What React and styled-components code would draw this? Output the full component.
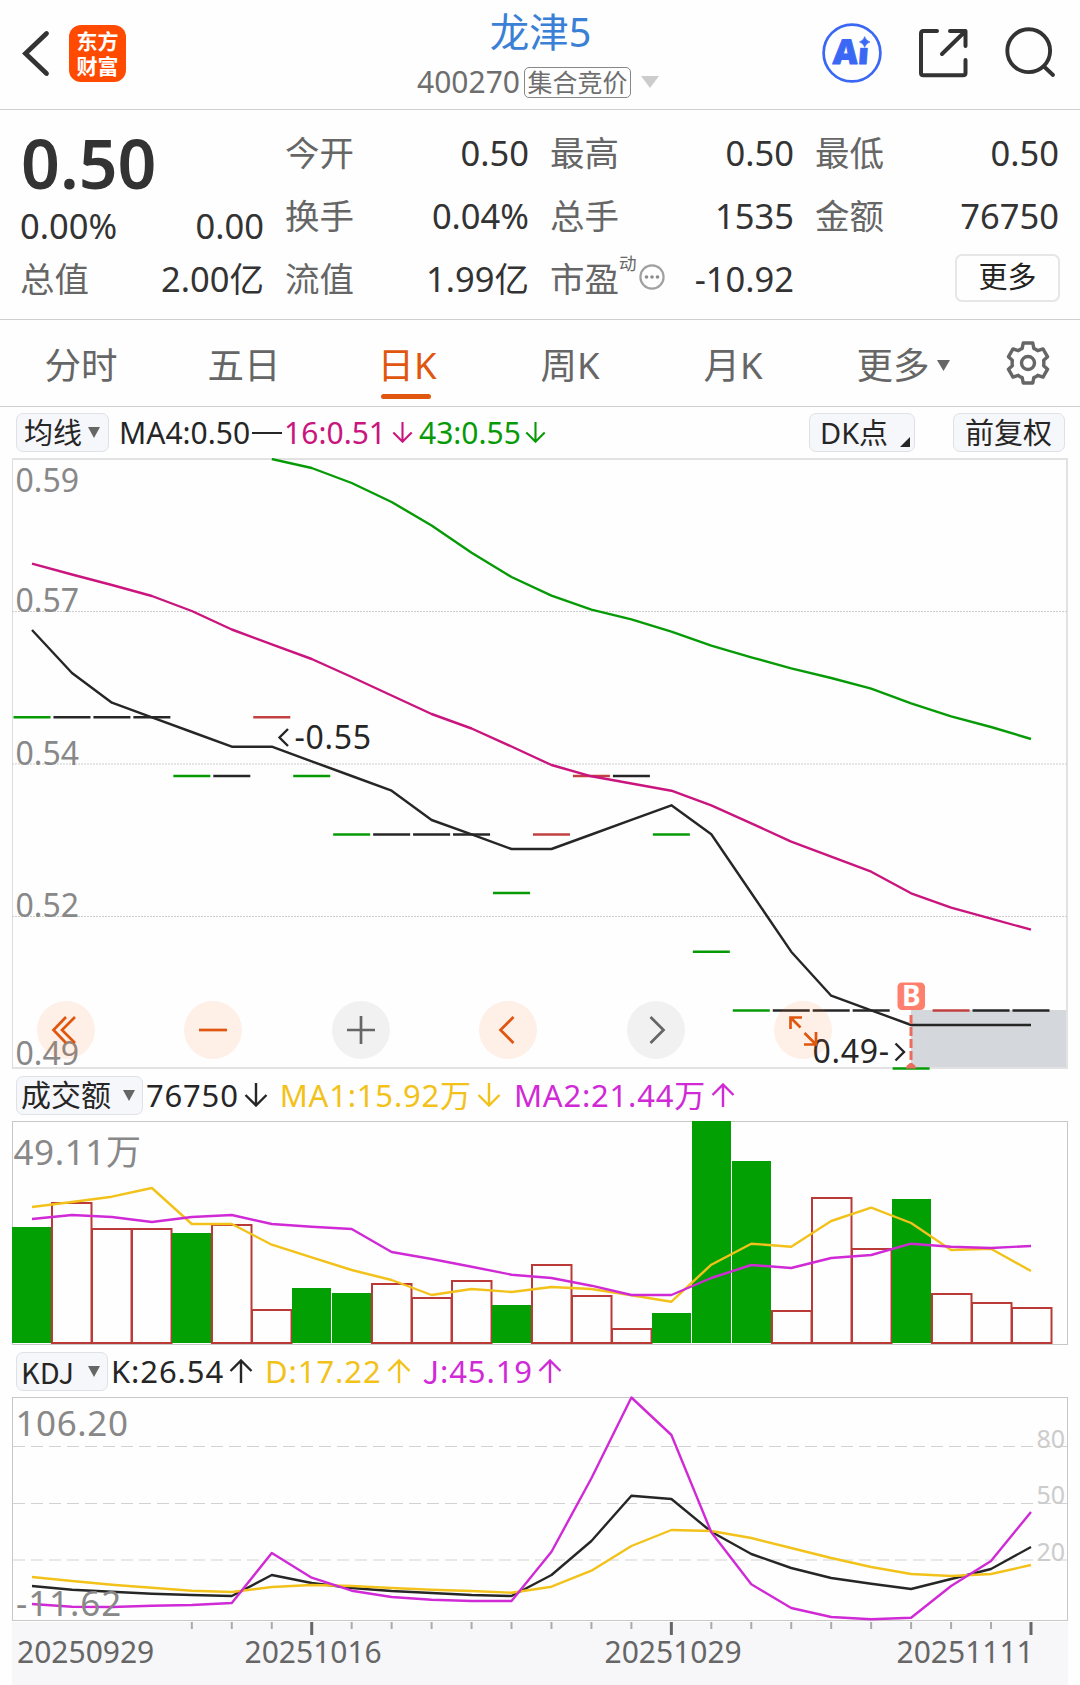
import React from "react";
import styled, { createGlobalStyle } from "styled-components";

const FONT = '"Noto Sans", "Noto Sans CJK SC", sans-serif';
const CJK = '"Noto Sans CJK SC", sans-serif';

const INK = "#333333";
const MUTED = "#666666";
const ORANGE = "#e0560f";
const GREEN = "#079a07";
const PINK = "#c9157d";
const YELLOW = "#f2c21a";
const PURPLE = "#d02ad6";
const BLACK = "#262626";
const RED = "#b93a36";

const GlobalStyle = createGlobalStyle`
  * { box-sizing: border-box; }
  html, body { margin: 0; padding: 0; background: #fefefe; }
  svg { display: block; flex: none; }
`;

const Page = styled.main`
  width: 1080px;
  height: 1685px;
  overflow: hidden;
  display: flex;
  flex-direction: column;
  background: #fefefe;
  color: ${INK};
  font-family: ${FONT};
`;

/* ---------- header ---------- */

const Header = styled.header`
  height: 110px;
  flex: none;
  display: grid;
  grid-template-columns: 360px 360px 360px;
  border-bottom: 1px solid #cfcfcf;
`;

const HeaderLeft = styled.div`
  display: flex;
  align-items: flex-start;
  padding: 25px 0 0 20px;
  gap: 17px;
`;

const Logo = styled.div`
  width: 57px;
  height: 57px;
  border-radius: 12px;
  background: #ff4a00;
  color: #fff;
  font: 700 21px/24.500px ${CJK};
  text-align: center;
  padding-top: 3px;
`;

const HeaderCenter = styled.div`
  display: flex;
  flex-direction: column;
  align-items: center;
  padding-top: 7px;
`;

const StockName = styled.h1`
  margin: 0 0 0 1px;
  font-size: 39.500px;
  font-weight: 400;
  line-height: 50px;
  color: #3a80d6;
`;

const CodeRow = styled.div`
  display: flex;
  align-items: center;
  height: 40px;
  margin: 5px 4px 0 0;
  font-size: 30px;
  line-height: 40px;
  color: #6e6e6e;
`;

const AuctionBadge = styled.span`
  width: 107px;
  height: 31px;
  margin: 0 10px 0 4px;
  border: 1.5px solid #888;
  border-radius: 5px;
  font-size: 25px;
  line-height: 28px;
  text-align: center;
  white-space: nowrap;
`;

const HeaderRight = styled.div`
  display: flex;
  justify-content: flex-end;
  align-items: flex-start;
  padding: 23px 24px 0 0;
  gap: 36px;
`;

/* ---------- quote ---------- */

const Quote = styled.section`
  height: 210px;
  flex: none;
  display: grid;
  grid-template-columns: 244px repeat(3, 244px);
  column-gap: 21px;
  padding: 11px 20px 0;
  border-bottom: 1px solid #cfcfcf;
`;

const QuoteColumn = styled.div`
  display: flex;
  flex-direction: column;
`;

const LastPrice = styled.div`
  height: 84px;
  padding-left: 1px;
  font-size: 68px;
  font-weight: 600;
  line-height: 84px;
`;

const QuoteRow = styled.div`
  height: ${(p) => p.$h || 63}px;
  line-height: ${(p) => p.$h || 63}px;
  font-size: 34.500px;
  display: flex;
  justify-content: space-between;
  align-items: center;
  white-space: nowrap;
`;

const Label = styled.span`
  color: ${MUTED};
  display: flex;
`;

const Sup = styled.sup`
  font-size: 17.500px;
  line-height: 28px;
  margin: 2px 2px 0 0;
  vertical-align: baseline;
  align-self: flex-start;
`;

const DotsBadge = styled.span`
  display: flex;
  align-items: center;
  height: 60px;
`;

const MoreButton = styled.button`
  width: 105px;
  height: 48px;
  margin: 0 -1px 2px auto;
  padding: 0 0 1px;
  border: 2px solid #e6e6e6;
  border-radius: 7px;
  background: #fefefe;
  color: #222;
  font: 400 29px/40px ${FONT};
`;

/* ---------- tabs ---------- */

const Tabs = styled.nav`
  height: 87px;
  flex: none;
  display: flex;
  border-bottom: 1px solid #cfcfcf;
`;

const Tab = styled.div`
  width: 163px;
  display: flex;
  flex-direction: column;
  align-items: center;
  padding: ${(p) => (p.$menu ? "20px 0 0 13px" : "20px 1px 0 0")};
  font-size: 36.500px;
  line-height: 50px;
  color: ${(p) => (p.$active ? ORANGE : MUTED)};
`;

const TabLabel = styled.span`
  display: flex;
  align-items: center;
  gap: 7px;
`;

const TabMarker = styled.span`
  width: 50px;
  height: 5px;
  margin: 4px 3px 0 0;
  border-radius: 3px;
  background: ${ORANGE};
`;

const SettingsCell = styled.div`
  flex: 1;
  display: flex;
  justify-content: center;
  padding: 20px 2px 0 0;
`;

/* ---------- indicator bars ---------- */

const IndicatorBar = styled.div`
  height: ${(p) => p.$h}px;
  flex: none;
  display: flex;
  align-items: center;
  padding: 0 15px 0 16px;
`;

const Chip = styled.button`
  width: ${(p) => p.$w}px;
  height: 39px;
  flex: none;
  display: flex;
  align-items: center;
  justify-content: space-between;
  padding: ${(p) => p.$pad || "0 8px 0 7px"};
  margin-left: ${(p) => p.$ml || 0}px;
  border: 1.5px solid #dfe1e6;
  border-radius: 7px;
  background: #f6f7fb;
  color: ${BLACK};
  font: 400 ${(p) => p.$size || 29}px/36px ${(p) => p.$font || FONT};
  white-space: nowrap;
`;

const Readout = styled.span`
  display: flex;
  margin-left: ${(p) => p.$ml || 0}px;
  color: ${(p) => p.$color};
  font-size: ${(p) => p.$size || 30}px;
  letter-spacing: ${(p) => p.$ls || 0}px;
  line-height: 40px;
  white-space: nowrap;
`;

const Letter = styled.span`
  font-family: ${CJK};
`;

const Arrow = styled.span`
  width: ${(p) => p.$w || 34}px;
  display: flex;
  justify-content: center;
  align-items: center;
`;

const Spacer = styled.div`
  flex: 1;
`;

/* ---------- charts ---------- */

const ChartPane = styled.section`
  position: relative;
  flex: none;
`;

const Controls = styled.div`
  position: absolute;
  left: 37px;
  right: 248px;
  bottom: 11px;
  display: flex;
  justify-content: space-between;
`;

const RoundButton = styled.button`
  width: 58px;
  height: 58px;
  padding: 0;
  border: 0;
  border-radius: 50%;
  background: ${(p) => (p.$muted ? "rgba(0,0,0,.05)" : "rgba(255,105,30,.1)")};
  color: ${(p) => (p.$muted ? MUTED : ORANGE)};
`;

const Triangle = ({ w = 12, h = 11, color = MUTED }) => (
  <svg width={w} height={h} viewBox="0 0 12 11" preserveAspectRatio="none">
    <path d="M0 0H12L6 11Z" fill={color} />
  </svg>
);

const MoveArrow = ({ up, w, size = 24 }) => (
  <Arrow $w={w}>
    <svg width={size} height={size} viewBox="0 0 24 24" fill="none" stroke="currentColor" strokeWidth="2.4">
      <path d={up ? "M12 24V1M1.5 12L12 1.5L22.5 12" : "M12 0V23M1.5 12L12 22.5L22.5 12"} />
    </svg>
  </Arrow>
);

const ControlIcon = ({ d }) => (
  <svg width="58" height="58" viewBox="0 0 58 58" fill="none" stroke="currentColor" strokeWidth="2.7">
    <path d={d} />
  </svg>
);

const X0 = 32;
const STEP = 39.96;
const xAt = (i) => X0 + STEP * i;
const toPoints = (values, start = 0) =>
  values.map((y, i) => `${xAt(i + start).toFixed(1)},${y}`).join(" ");

const Series = ({ values, start, color, width = 2.4 }) => (
  <polyline points={toPoints(values, start)} fill="none" stroke={color} strokeWidth={width} strokeLinejoin="round" />
);

const ma4 = [630, 673, 702.7, 717.3, 732, 746.7, 746.7, 761.3, 776, 790.7, 820, 834.3, 849, 849, 834.5, 819.8, 805.3, 834.3, 893, 951.7, 995.7, 1010.3, 1025, 1025, 1025, 1025];
const ma16 = [563.7, 574.5, 585, 596, 611, 629.5, 644.3, 659, 677, 695.5, 714, 728.5, 746.5, 765, 776.3, 783.5, 790.7, 805.3, 823.3, 841.7, 856.7, 871.7, 893.3, 907.7, 918.7, 929.7];
const ma43 = [459, 468, 483, 502, 525.5, 552.7, 577, 595.7, 609.7, 619.3, 631.7, 645.7, 657.3, 668.3, 678, 688.7, 703.3, 716.3, 727, 739];

const G = GREEN;
const K = BLACK;
const R = "#c24140";
const candles = [
  [717.3, G], [717.3, K], [717.3, K], [717.3, K], [776, G], [776, K], [717.3, R], [776, G],
  [834.5, G], [834.5, K], [834.5, K], [834.5, K], [893, G], [834.5, R], [776, R], [776, K],
  [834.5, G], [951.7, G], [1010.5, G], [1010.5, K], [1010.5, K], [1010.5, K], [1068.5, G],
  [1010.5, R], [1010.5, K], [1010.5, K],
];

const volumes = [
  [1227, 1], [1203, 0], [1229, 0], [1229, 0], [1233, 1], [1225, 0], [1310, 0], [1288, 1], [1293, 1],
  [1284, 0], [1298, 0], [1281, 0], [1305, 1], [1265, 0], [1296, 0], [1329, 0], [1313, 1], [1121, 1],
  [1161, 1], [1311, 0], [1198, 0], [1249, 0], [1199, 1], [1294, 0], [1303, 0], [1308, 0],
];
const volMa1 = [1207, 1202, 1196.7, 1188, 1224, 1224, 1244.7, 1257.3, 1270, 1280, 1295, 1289, 1292, 1287, 1289, 1295.3, 1301.7, 1264.7, 1243.7, 1246.7, 1221, 1207.7, 1223, 1250, 1248.7, 1271];
const volMa2 = [1219, 1215, 1217, 1222, 1217, 1215, 1224, 1226.7, 1229, 1252, 1259, 1266.7, 1274.7, 1278, 1285.7, 1295, 1295, 1278, 1265, 1268, 1258, 1255, 1243.7, 1246.7, 1248, 1246];

const kLine = [1586, 1589.7, 1591.7, 1593.7, 1595, 1596, 1575, 1583, 1588, 1591, 1593, 1595, 1596, 1575, 1541, 1495.7, 1499, 1531.7, 1554, 1568, 1578, 1583.7, 1589, 1579, 1569, 1547];
const dLine = [1577, 1581, 1584.7, 1587.7, 1590.7, 1592, 1587, 1585, 1586, 1588, 1589.7, 1591, 1592.7, 1586.7, 1570.7, 1546, 1530, 1531, 1538, 1548, 1558, 1567, 1574, 1576, 1574, 1565];
const jLine = [1604, 1606.7, 1607, 1605.8, 1605, 1603, 1553, 1577.7, 1590.7, 1597, 1599.7, 1601, 1601, 1551.7, 1478.3, 1397.5, 1435, 1532.3, 1584.3, 1608, 1617, 1619.3, 1617.7, 1586, 1561, 1512];

const PriceChart = () => (
  <svg width="1080" height="612" viewBox="0 458 1080 612" fontFamily={FONT}>
    <rect x="911" y="1010" width="156" height="58.5" fill="#d4d7dc" />
    <path d="M12.5 459V1068" stroke="#dcdcdc" strokeWidth="1" />
    <path d="M12 459H1067V1068H12" fill="none" stroke="#e2e2e2" strokeWidth="2" />
    <path d="M12 611.5H1067M12 764H1067M12 916.5H1067" stroke="#cdcdcd" strokeWidth="1" strokeDasharray="2 1" />
    {candles.map(([y, color], i) => (
      <path key={i} d={`M${xAt(i) - 18.5} ${y}h37`} stroke={color} strokeWidth="2.4" />
    ))}
    <Series values={ma43} start={6} color={GREEN} />
    <Series values={ma16} color={PINK} />
    <Series values={ma4} color={BLACK} />
    <g fontSize="32" fill="#888888">
      <text x="15.500" y="491.500">0.59</text>
      <text x="15.500" y="611.500">0.57</text>
      <text x="15.500" y="764.500">0.54</text>
      <text x="15.500" y="916.500">0.52</text>
      <text x="15.500" y="1065">0.49</text>
    </g>
    <g fontSize="32" fill={BLACK} letterSpacing="0.7">
      <text x="294.500" y="748.500">-0.55</text>
      <text x="812.500" y="1062.500">0.49-</text>
    </g>
    <path d="M288 729L279.5 737.5L288 746" fill="none" stroke={BLACK} strokeWidth="2.4" />
    <path d="M895.5 1043.5L904 1052L895.5 1060.5" fill="none" stroke={BLACK} strokeWidth="2.4" />
    <path d="M911 1015V1068" stroke="#ea6c5e" strokeWidth="3" strokeDasharray="9 3" />
    <path d="M906 1068.5a5 5 0 0 1 10 0z" fill="#ea6c5e" />
    <rect x="897.5" y="982.5" width="27.5" height="27.5" rx="4.5" fill="#ff7f6e" />
    <text x="911.3" y="1006" textAnchor="middle" fontSize="28" fontWeight="700" fill="#fff">B</text>
  </svg>
);

const VolumeChart = () => (
  <svg width="1080" height="226" viewBox="0 1120 1080 226" fontFamily={FONT}>
    <rect x="12.5" y="1121.5" width="1055" height="223" fill="none" stroke="#c8c8c8" />
    {volumes.map(([top, filled], i) =>
      filled ? (
        <rect key={i} x={12 + 40 * i} y={top} width="39" height={1343 - top} fill="#03a003" />
      ) : (
        <rect key={i} x={12 + 40 * i} y={top} width="39.5" height={1343 - top} fill="#fefefe" stroke={RED} strokeWidth="2" />
      )
    )}
    <Series values={volMa1} color={YELLOW} />
    <Series values={volMa2} color={PURPLE} />
    <text x="13.5" y="1164.500" fontSize="35" letterSpacing="0.6" fill="#888888">49.11万</text>
  </svg>
);

const dates = [
  ["20250929", 17],
  ["20251016", 244.5],
  ["20251029", 604.5],
  ["20251111", 896.5],
];

const KdjChart = () => (
  <svg width="1080" height="289" viewBox="0 1396 1080 289" fontFamily={FONT}>
    <rect x="12" y="1622" width="1056" height="63" fill="#f7f7fa" />
    <rect x="12.5" y="1397.5" width="1055" height="223" fill="none" stroke="#c8c8c8" />
    <path d="M13 1446.5H1067M13 1503.5H1067M13 1560H1067" stroke="#d2d2d2" strokeWidth="1.2" strokeDasharray="12 6" />
    <g fontSize="25" fill="#cccccc">
      <text x="1036.500" y="1447.500">80</text>
      <text x="1036.500" y="1504">50</text>
      <text x="1036.500" y="1560.500">20</text>
    </g>
    <Series values={kLine} color={BLACK} />
    <Series values={dLine} color={YELLOW} />
    <Series values={jLine} color={PURPLE} />
    <g fontSize="35" fill="#888888">
      <text x="15.5" y="1436" letterSpacing="0.6">106.20</text>
      <text x="16" y="1616" letterSpacing="0.9">-11.62</text>
    </g>
    {Array.from({ length: 22 }, (_, n) => n + 4).map((i) => {
      const major = i === 7 || i === 16 || i === 25;
      return (
        <path key={i} d={`M${xAt(i)} 1622v${major ? 13 : 7}`} stroke={major ? "#666" : "#aaa"} strokeWidth={major ? 3 : 2} />
      );
    })}
    <g fontSize="30" fill="#666666">
      {dates.map(([d, x]) => (
        <text key={d} x={x} y="1662.5">{d}</text>
      ))}
    </g>
  </svg>
);

/* ---------- icons ---------- */

const BackIcon = () => (
  <svg width="32" height="57" viewBox="20 25 32 57" fill="none" stroke={INK} strokeWidth="4.800" strokeLinecap="round">
    <path d="M46.500 33.500L25.500 53.500L46.500 73.500" />
  </svg>
);

const AiIcon = () => (
  <svg width="60" height="60" viewBox="0 0 60 60">
    <circle cx="30" cy="30" r="28.4" fill="none" stroke="#3a68f5" strokeWidth="2.7" />
    <g transform="translate(10.5 41.300) skewX(-4)">
      <text fontFamily='"Noto Sans", sans-serif' fontSize="34" fontWeight="900" fill="#3a68f5" stroke="#3a68f5" strokeWidth="1" strokeLinejoin="round">Ai</text>
    </g>
    <rect x="34.500" y="11" width="15" height="13.800" fill="#fefefe" />
    <path d="M42.7 13.6Q43.9 17.8 48 19Q43.9 20.2 42.7 24.4Q41.5 20.2 37.400 19Q41.5 17.8 42.7 13.6Z" fill="#3a68f5" stroke="#3a68f5" strokeWidth=".6" />
  </svg>
);

const ShareIcon = () => (
  <svg width="50" height="60" viewBox="918 23 50 60" fill="none" stroke={INK} strokeWidth="4" strokeLinecap="round" strokeLinejoin="round">
    <path d="M937 31H923.5Q921 31 921 33.5V73Q921 75.300 923.5 75.300H963Q965.500 75.300 965.500 73V60M950 31H965.500V46M965 31.500L942 54" />
  </svg>
);

const SearchIcon = () => (
  <svg width="52" height="60" viewBox="1004 23 52 60" fill="none" stroke={INK} strokeWidth="3.900" strokeLinecap="round">
    <circle cx="1028.700" cy="50.700" r="21.400" />
    <path d="M1044 66.500L1053 75" />
  </svg>
);

const GearIcon = () => (
  <svg width="44" height="46" viewBox="-22 -23 44 46" fill="none" stroke={MUTED} strokeWidth="3.4" strokeLinejoin="round">
    <path d="M-4.800 -20H4.800L5.800 -14.600Q8 -13.700 9.800 -12.300L15 -14.100L19.600 -6.200L15.700 -2.700Q16 0 15.700 2.700L19.600 6.200L15 14.100L9.800 12.300Q8 13.700 5.800 14.600L4.800 20H-4.800L-5.800 14.600Q-8 13.700 -9.800 12.300L-15 14.100L-19.600 6.200L-15.700 2.700Q-16 0 -15.700 -2.700L-19.600 -6.200L-15 -14.100L-9.800 -12.300Q-8 -13.700 -5.800 -14.600Z" />
    <circle r="6.500" />
  </svg>
);

const DotsIcon = () => (
  <svg width="26" height="26" viewBox="0 0 26 26">
    <circle cx="13" cy="13" r="11.600" fill="none" stroke="#a0a0a0" strokeWidth="2.200" />
    <g fill="#8c8c8c">
      <circle cx="7.500" cy="13" r="1.800" />
      <circle cx="13" cy="13" r="1.800" />
      <circle cx="18.500" cy="13" r="1.800" />
    </g>
  </svg>
);

const controls = [
  { d: "M29 16L16.500 29L29 42M38 16L25 29L38 42" },
  { d: "M15 29H43" },
  { d: "M15 29H43M29 15V43", muted: true },
  { d: "M34.500 16L21.500 29L34.500 42" },
  { d: "M23.500 16L36.500 29L23.500 42", muted: true },
  { d: "M28 16.500H16.500V28M16.500 16.500L26.500 26.500M30.500 32L42 43.500M30 43.500H42V31" },
];

export default function App() {
  return (
    <>
      <GlobalStyle />
      <Page>
        <Header>
          <HeaderLeft>
            <BackIcon />
            <Logo>东方<br />财富</Logo>
          </HeaderLeft>
          <HeaderCenter>
            <StockName>龙津5</StockName>
            <CodeRow>
              400270
              <AuctionBadge>集合竞价</AuctionBadge>
              <Triangle w={18} h={12} color="#cccccc" />
            </CodeRow>
          </HeaderCenter>
          <HeaderRight>
            <AiIcon />
            <ShareIcon />
            <SearchIcon />
          </HeaderRight>
        </Header>

        <Quote>
          <QuoteColumn>
            <LastPrice>0.50</LastPrice>
            <QuoteRow $h={42}><span>0.00%</span><span>0.00</span></QuoteRow>
            <QuoteRow><Label>总值</Label><span>2.00亿</span></QuoteRow>
          </QuoteColumn>
          <QuoteColumn>
            <QuoteRow><Label>今开</Label><span>0.50</span></QuoteRow>
            <QuoteRow><Label>换手</Label><span>0.04%</span></QuoteRow>
            <QuoteRow><Label>流值</Label><span>1.99亿</span></QuoteRow>
          </QuoteColumn>
          <QuoteColumn>
            <QuoteRow><Label>最高</Label><span>0.50</span></QuoteRow>
            <QuoteRow><Label>总手</Label><span>1535</span></QuoteRow>
            <QuoteRow><Label>市盈<Sup>动</Sup><DotsBadge><DotsIcon /></DotsBadge></Label><span>-10.92</span></QuoteRow>
          </QuoteColumn>
          <QuoteColumn>
            <QuoteRow><Label>最低</Label><span>0.50</span></QuoteRow>
            <QuoteRow><Label>金额</Label><span>76750</span></QuoteRow>
            <QuoteRow><MoreButton>更多</MoreButton></QuoteRow>
          </QuoteColumn>
        </Quote>

        <Tabs>
          <Tab>分时</Tab>
          <Tab>五日</Tab>
          <Tab $active>日K<TabMarker /></Tab>
          <Tab>周K</Tab>
          <Tab>月K</Tab>
          <Tab $menu><TabLabel>更多<Triangle w={13} h={11} /></TabLabel></Tab>
          <SettingsCell><GearIcon /></SettingsCell>
        </Tabs>

        <IndicatorBar $h={51}>
          <Chip $w={93}>均线<Triangle /></Chip>
          <Readout $color={BLACK} $ml={10}>MA4:0.50<Arrow $w={33}><svg width="30" height="2"><path d="M0 1H30" stroke={BLACK} strokeWidth="2" /></svg></Arrow></Readout>
          <Readout $color={PINK} $ml={1}>16:0.51<MoveArrow size={21} w={32} /></Readout>
          <Readout $color={GREEN} $ml={1}>43:0.55<MoveArrow size={21} w={30} /></Readout>
          <Spacer />
          <Chip $w={106} $pad="0 4px 0 10px">
            DK点
            <svg width="10" height="10" style={{ marginTop: 18 }}><path d="M10 0V10H0Z" fill={BLACK} /></svg>
          </Chip>
          <Chip $w={112} $ml={38} $pad="0 11px">前复权</Chip>
        </IndicatorBar>

        <ChartPane>
          <PriceChart />
          <Controls>
            {controls.map((c) => (
              <RoundButton key={c.d} $muted={c.muted}><ControlIcon d={c.d} /></RoundButton>
            ))}
          </Controls>
        </ChartPane>

        <IndicatorBar $h={50}>
          <Chip $w={127} $pad="0 7px 0 4px" $size={30}>成交额<Triangle /></Chip>
          <Readout $color={BLACK} $ml={3} $size={31} $ls={0.8}>76750<MoveArrow /></Readout>
          <Readout $color={YELLOW} $ml={7} $size={31} $ls={0.8}>MA1:15.92万<MoveArrow /></Readout>
          <Readout $color={PURPLE} $ml={8} $size={31} $ls={0.8}>MA2:21.44万<MoveArrow up /></Readout>
        </IndicatorBar>
        <ChartPane>
          <VolumeChart />
        </ChartPane>

        <IndicatorBar $h={50}>
          <Chip $w={92} $pad="0 7px 0 4px" $font={CJK}>KDJ<Triangle /></Chip>
          <Readout $color={BLACK} $ml={3} $size={31} $ls={0.9}>K:26.54<MoveArrow up /></Readout>
          <Readout $color={YELLOW} $ml={7} $size={31} $ls={0.9}>D:17.22<MoveArrow up /></Readout>
          <Readout $color={PURPLE} $ml={7} $size={31} $ls={0.9}><Letter>J</Letter>:45.19<MoveArrow up /></Readout>
        </IndicatorBar>
        <ChartPane>
          <KdjChart />
        </ChartPane>
      </Page>
    </>
  );
}
